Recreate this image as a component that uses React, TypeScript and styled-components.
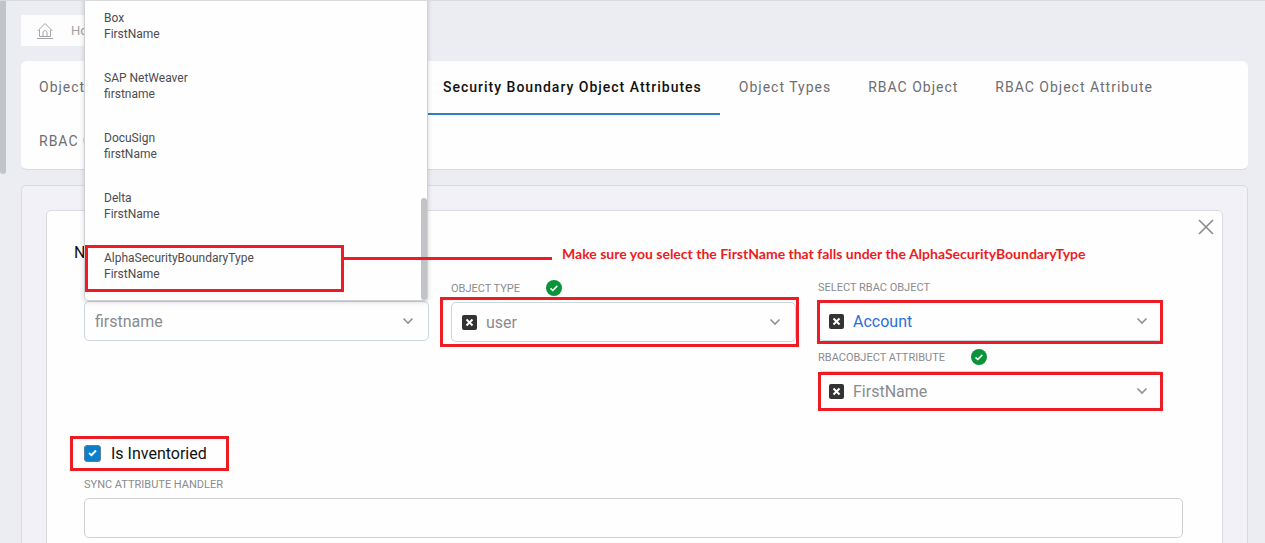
import React from "react";
import styled, { createGlobalStyle } from "styled-components";

const Global = createGlobalStyle`
  * { box-sizing: border-box; }
  body { margin: 0; background: #ecedf2; font-family: Roboto, "Liberation Sans", sans-serif; }
  button, input, select { font-family: inherit; }
`;

const Page = styled.div`
  display: flex;
  height: 100vh;
  overflow: hidden;
  border-top: 1px solid #d9dadd;
`;

const ScrollThumb = styled.div`
  flex: none;
  width: 6px;
  height: 173px;
  border-radius: 0 0 3px 3px;
  background: #c1c4c9;
`;

const Main = styled.main`
  flex: 1;
  min-width: 0;
  padding: 14px 17px 0 15px;
`;

const Breadcrumb = styled.nav`
  display: flex;
  align-items: center;
  gap: 17px;
  width: 240px;
  height: 31px;
  padding-left: 15px;
  background: #fdfdfe;
`;

const Crumb = styled.a`
  color: #a0a0a5;
  font-size: 13px;
  text-decoration: none;
`;

const TabBar = styled.nav`
  display: flex;
  flex-wrap: wrap;
  column-gap: 1px;
  margin-top: 15px;
  background: #fefefe;
  border-bottom: 1px solid #d8d9df;
  border-radius: 6px;
`;

const Tab = styled.button<{ $active?: boolean; $basis?: number }>`
  flex: 0 0 ${(p) => (p.$basis ? `${p.$basis}px` : "auto")};
  height: 54px;
  padding: 0 18px;
  border: 0;
  border-bottom: 2px solid ${(p) => (p.$active ? "#2f80c0" : "transparent")};
  background: none;
  color: ${(p) => (p.$active ? "#111" : "#6d6d72")};
  font-size: 14px;
  font-weight: ${(p) => (p.$active ? 500 : 400)};
  letter-spacing: 1px;
  text-align: left;
  white-space: nowrap;
`;

const Panel = styled.section`
  margin-top: 15px;
  padding: 24px 24px 0;
  background: #f2f1f7;
  border: 1px solid #d9dbe2;
  border-radius: 5px;
`;

const Card = styled.div`
  min-height: 400px;
  background: #fefefe;
  border: 1px solid #dadbe1;
  border-radius: 5px;
`;

const CardTop = styled.div`
  display: flex;
  align-items: center;
  justify-content: flex-end;
  height: 32px;
  padding-right: 8px;
`;

const CloseButton = styled.button`
  display: flex;
  padding: 0;
  border: 0;
  background: none;
`;

const Title = styled.h1`
  margin: 0 27px;
  color: #111;
  font-size: 16px;
  font-weight: 400;
  line-height: 20px;
`;

const Form = styled.form`
  padding: 15px 39px 0 37px;
`;

const Columns = styled.div`
  display: grid;
  grid-template-columns: repeat(3, minmax(0, 1fr));
  column-gap: 22px;
  align-items: start;
  padding-right: 20px;
`;

const Column = styled.div<{ $top?: number }>`
  display: flex;
  flex-direction: column;
  gap: 7px;
  padding-top: ${(p) => p.$top ?? 0}px;
`;

const Field = styled.div`
  display: flex;
  flex-direction: column;
  gap: 5px;
`;

const LabelRow = styled.div`
  display: flex;
  align-items: center;
  gap: 26px;
  height: 18px;
`;

const Label = styled.label`
  padding-top: 2px;
  color: #8b8b90;
  font-size: 11px;
  line-height: 16px;
`;

const SelectBox = styled.div`
  position: relative;
  display: flex;
  align-items: center;
  height: 40px;
  padding: 0 14px 0 10px;
  background: #fefefe;
  border: 1px solid #ccd4de;
  border-radius: 5px;
`;

const Select = styled.select<{ $blue?: boolean }>`
  flex: 1;
  min-width: 0;
  padding: 0;
  appearance: none;
  border: 0;
  outline: 0;
  background: none;
  color: ${(p) => (p.$blue ? "#2a6fdb" : "#8a8b90")};
  font-size: 16px;
`;

const ClearButton = styled.button`
  display: flex;
  align-items: center;
  justify-content: center;
  width: 15px;
  height: 15px;
  margin-right: 9px;
  padding: 0;
  border: 0;
  border-radius: 2px;
  background: #333;
`;

const Highlight = styled.span<{ $inset: string }>`
  position: absolute;
  inset: ${(p) => p.$inset};
  border: 3px solid #ed1c24;
  pointer-events: none;
`;

const Menu = styled.ul`
  position: absolute;
  z-index: 2;
  left: -1px;
  right: 0;
  bottom: 39px;
  height: 360px;
  display: flex;
  flex-direction: column;
  justify-content: flex-end;
  margin: 0;
  padding: 0 0 4px;
  list-style: none;
  background: #fefefe;
  border: 1px solid #cfd0d4;
  border-radius: 4px;
  box-shadow: 0 1px 5px rgba(0, 0, 0, 0.16);
`;

const MenuThumb = styled.li`
  position: absolute;
  right: 0;
  bottom: 0;
  width: 6px;
  height: 102px;
  border-radius: 3px;
  background: #c1c3c6;
`;

const Option = styled.li`
  position: relative;
  padding: 14px 19px;
  color: #4c4c50;
  font-size: 12px;
  line-height: 16px;
`;

const OptionLine = styled.span`
  display: block;
`;

const Callout = styled.div`
  position: absolute;
  z-index: 3;
  top: 14px;
  left: 259px;
  display: flex;
  align-items: center;
  gap: 10px;
  height: 16px;
  color: #ed1c24;
  font-family: Lato, sans-serif;
  font-size: 14px;
  font-weight: 700;
  white-space: nowrap;
`;

const CalloutText = styled.span`
  padding-bottom: 9px;
`;

const CalloutLine = styled.span`
  width: 208px;
  height: 3px;
  background: #ed1c24;
`;

const CheckRow = styled.div`
  display: flex;
  margin-top: 30px;
`;

const CheckLabel = styled.label`
  position: relative;
  display: flex;
  align-items: center;
  gap: 10px;
  height: 24px;
  color: #111;
  font-size: 16px;
`;

const Checkbox = styled.input`
  appearance: none;
  width: 17px;
  height: 17px;
  margin: 0;
  border: 1px solid #5a7f9c;
  border-radius: 3px;
  background: #0b7fc9;
`;

const Tick = styled.svg`
  position: absolute;
  left: 4px;
  top: 8px;
  pointer-events: none;
`;

const WideField = styled(Field)`
  margin-top: 10px;
`;

const TextInput = styled.input`
  width: 100%;
  height: 40px;
  padding: 0 10px;
  border: 1px solid #cfcfd4;
  border-radius: 5px;
  background: #fefefe;
  font-size: 16px;
`;

const Chevron = () => (
  <svg width="12" height="8" viewBox="0 0 12 8" fill="none" stroke="#919196" strokeWidth="1.6" aria-hidden>
    <path d="M1.5 1.5 6 6l4.500-4.500" />
  </svg>
);

const Valid = () => (
  <svg width="16" height="16" viewBox="0 0 16 16" aria-hidden>
    <circle cx="8" cy="8" r="8" fill="#0a9339" />
    <path d="m4.500 8.300 2.300 2.200 4.500-4.600" fill="none" stroke="#fff" strokeWidth="1.600" />
  </svg>
);

const House = () => (
  <svg width="18" height="18" viewBox="0 0 18 18" fill="none" stroke="#a3a3a8" strokeWidth="1" aria-hidden>
    <path d="M1.500 9 9 1.500 16.500 9M3.500 8v6.500h11V8M7 14.500v-4c0-2.500 4-2.500 4 0v4M1 16.500h16" />
  </svg>
);

const Clear = ({ name }: { name: string }) => (
  <ClearButton type="button" aria-label={`Clear ${name}`}>
    <svg width="9" height="9" viewBox="0 0 9 9" stroke="#fff" strokeWidth="2" aria-hidden>
      <path d="m1.500 1.500 6 6m0-6-6 6" />
    </svg>
  </ClearButton>
);

type PickerProps = { id: string; label: string; value: string; valid?: boolean; blue?: boolean; inset: string };

const Picker = ({ id, label, value, valid, blue, inset }: PickerProps) => (
  <Field>
    <LabelRow>
      <Label htmlFor={id}>{label}</Label>
      {valid && <Valid />}
    </LabelRow>
    <SelectBox>
      <Clear name={value} />
      <Select id={id} $blue={blue} defaultValue={value}>
        <option>{value}</option>
      </Select>
      <Chevron />
      <Highlight $inset={inset} />
    </SelectBox>
  </Field>
);

const options = [
  ["Box", "FirstName"],
  ["SAP NetWeaver", "firstname"],
  ["DocuSign", "firstName"],
  ["Delta", "FirstName"],
  ["AlphaSecurityBoundaryType", "FirstName"],
];

export default function App() {
  return (
    <>
      <Global />
      <Page>
        <ScrollThumb />
        <Main>
          <Breadcrumb>
            <House />
            <Crumb href="#home">Home</Crumb>
          </Breadcrumb>
          <TabBar>
            <Tab $basis={403}>Object</Tab>
            <Tab $active>Security Boundary Object Attributes</Tab>
            <Tab>Object Types</Tab>
            <Tab>RBAC Object</Tab>
            <Tab>RBAC Object Attribute</Tab>
            <Tab $basis={160}>RBAC O</Tab>
          </TabBar>
          <Panel>
            <Card>
              <CardTop>
                <CloseButton aria-label="Close">
                  <svg width="16" height="16" viewBox="0 0 16 16" stroke="#8d8d91" strokeWidth="1.700" aria-hidden>
                    <path d="m1 1 14 14m0-14L1 15" />
                  </svg>
                </CloseButton>
              </CardTop>
              <Title>New</Title>
              <Form>
                <Columns>
                  <Column $top={23}>
                    <SelectBox>
                      <Select aria-label="Attribute" defaultValue="firstname">
                        <option>firstname</option>
                      </Select>
                      <Chevron />
                      <Menu role="listbox" aria-label="Attributes">
                        {options.map(([system, attribute], i) => (
                          <Option key={system} role="option">
                            <OptionLine>{system}</OptionLine>
                            <OptionLine>{attribute}</OptionLine>
                            {i === options.length - 1 && (
                              <>
                                <Highlight $inset="9px 83px 4px 0" />
                                <Callout>
                                  <CalloutLine />
                                  <CalloutText>
                                    Make sure you select the FirstName that falls under the AlphaSecurityBoundaryType
                                  </CalloutText>
                                </Callout>
                              </>
                            )}
                          </Option>
                        ))}
                        <MenuThumb role="presentation" />
                      </Menu>
                    </SelectBox>
                  </Column>
                  <Column $top={1}>
                    <Picker id="object-type" label="OBJECT TYPE" value="user" valid inset="-6px -4px -6px -12px" />
                  </Column>
                  <Column>
                    <Picker id="rbac-object" label="SELECT RBAC OBJECT" value="Account" blue inset="-2px -1px -4px -2px" />
                    <Picker id="rbac-attribute" label="RBACOBJECT ATTRIBUTE" value="FirstName" valid inset="0 -1px -1px -1px" />
                  </Column>
                </Columns>
                <CheckRow>
                  <CheckLabel>
                    <Checkbox type="checkbox" defaultChecked />
                    <Tick width="9" height="8" viewBox="0 0 9 8" fill="none" stroke="#fff" strokeWidth="2" aria-hidden>
                      <path d="m1 4 2.500 2.200L8 1.500" />
                    </Tick>
                    Is Inventoried
                    <Highlight $inset="-5px -22px -6px -14px" />
                  </CheckLabel>
                </CheckRow>
                <WideField>
                  <Label htmlFor="sync-handler">SYNC ATTRIBUTE HANDLER</Label>
                  <TextInput id="sync-handler" type="text" />
                </WideField>
              </Form>
            </Card>
          </Panel>
        </Main>
      </Page>
    </>
  );
}
